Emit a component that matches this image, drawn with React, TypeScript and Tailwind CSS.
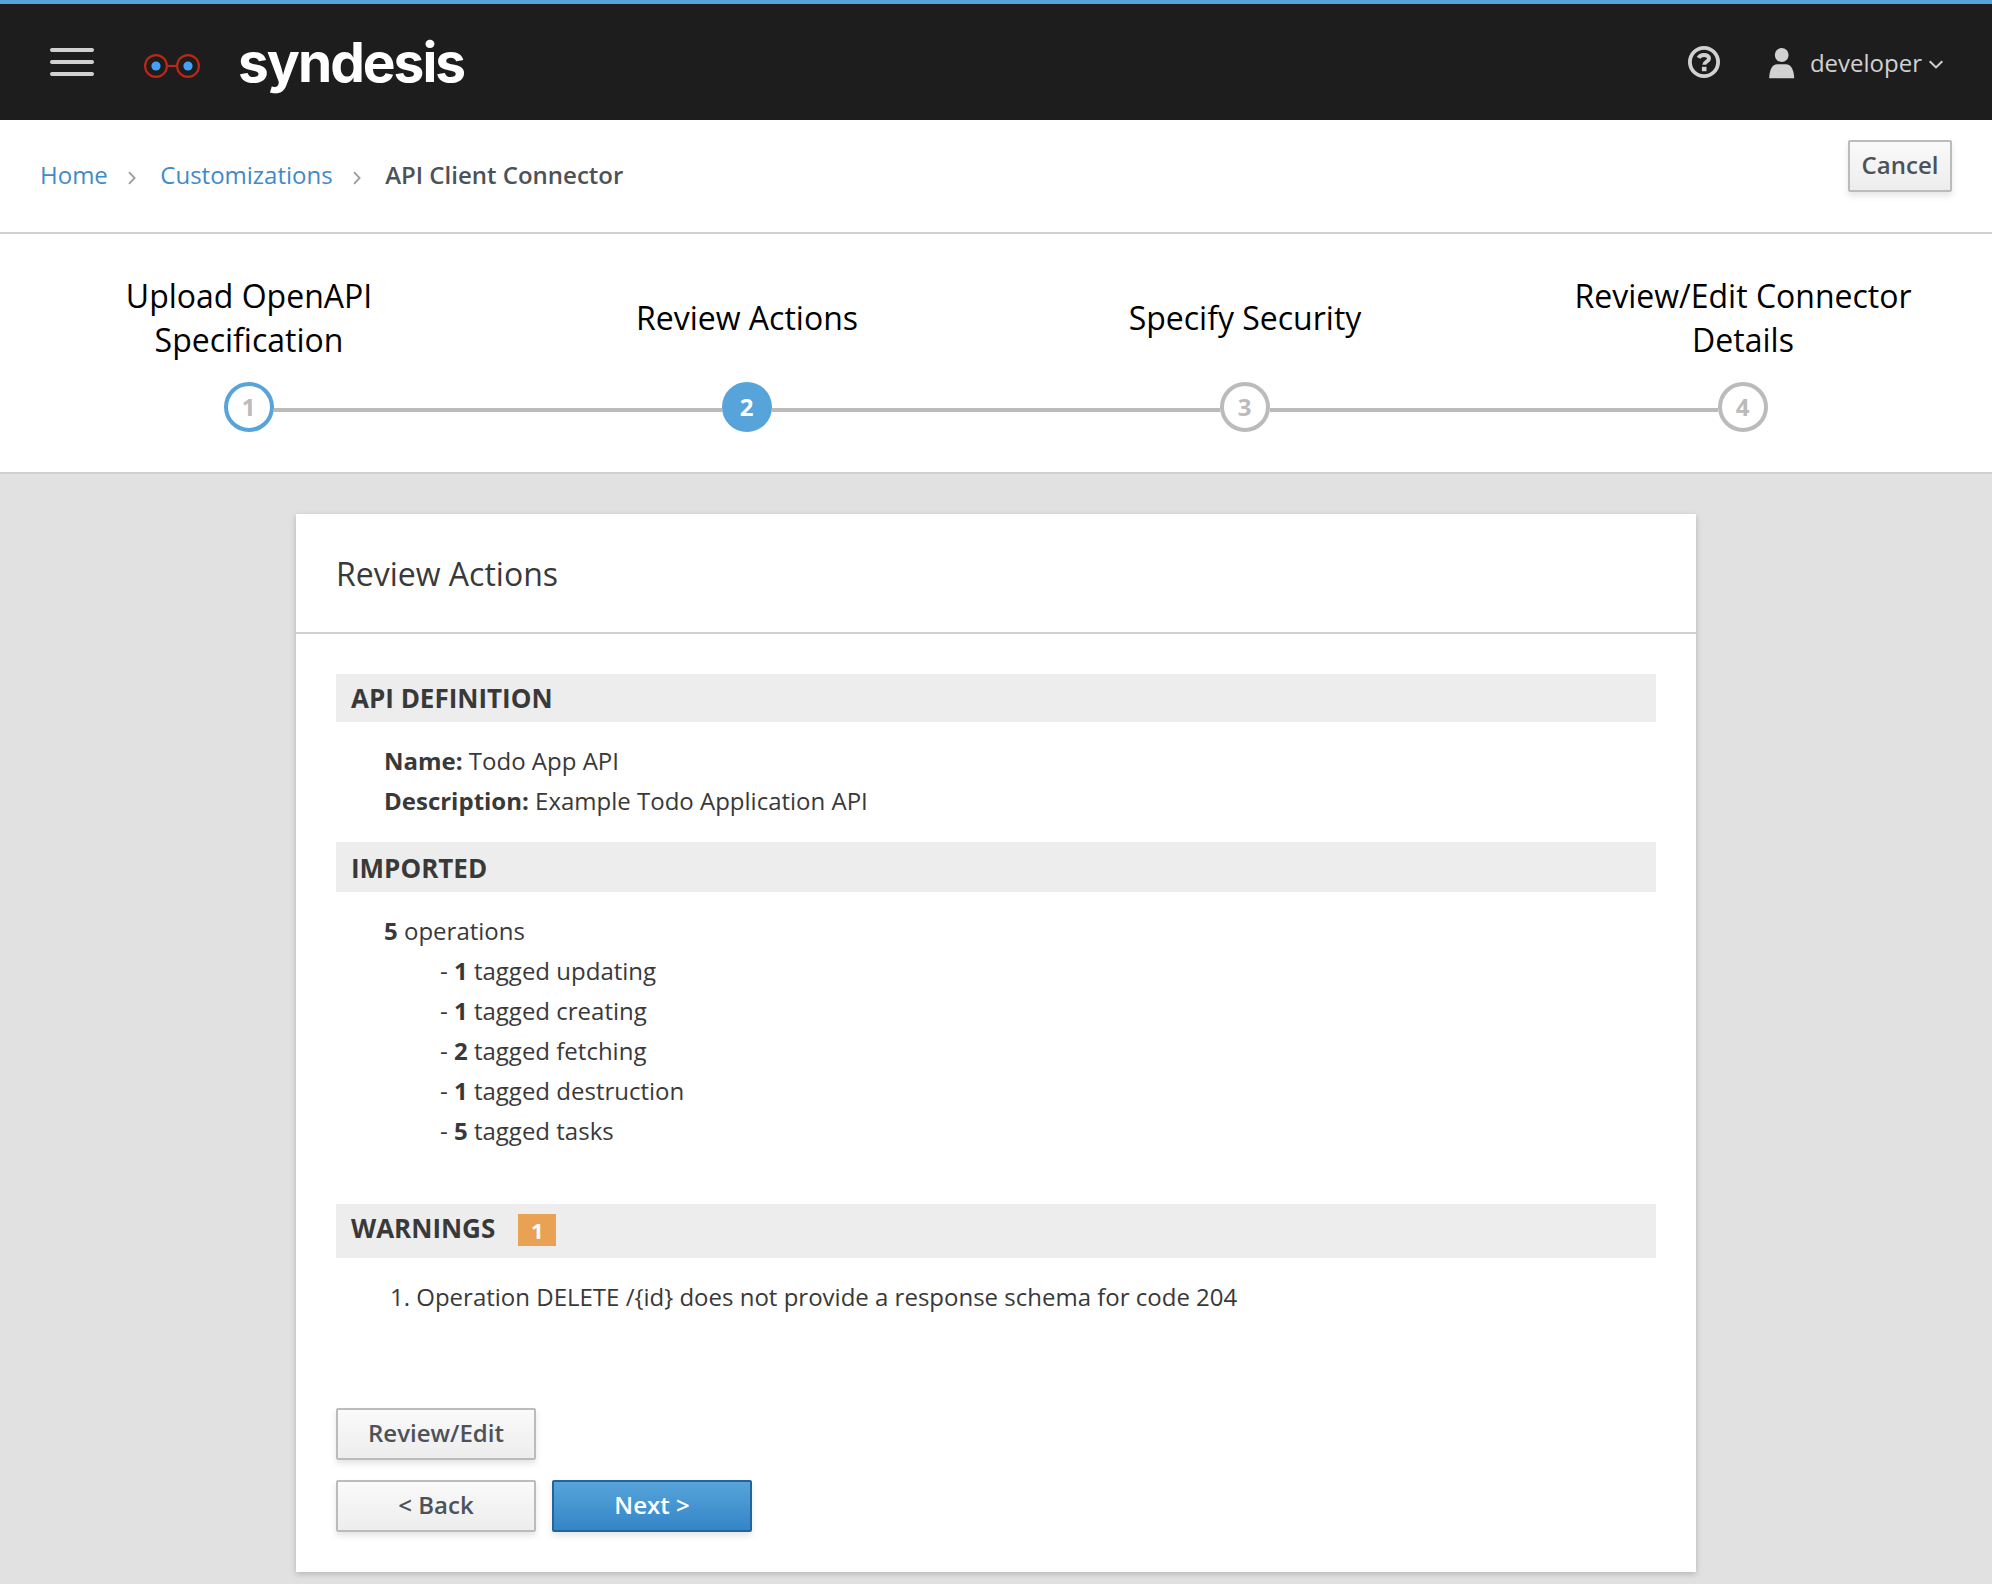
const steps = [
  { n: 1, label: ["Upload OpenAPI", "Specification"], state: "visited" },
  { n: 2, label: ["Review Actions"], state: "active" },
  { n: 3, label: ["Specify Security"], state: "todo" },
  { n: 4, label: ["Review/Edit Connector", "Details"], state: "todo" },
];

const circleStyles: Record<string, string> = {
  visited: "border-[#57a4da] bg-white text-[#bbbbbb]",
  active: "border-[#57a4da] bg-[#57a4da] text-white",
  todo: "border-[#bbbbbb] bg-white text-[#bbbbbb]",
};

const tags = [
  { count: 1, name: "updating" },
  { count: 1, name: "creating" },
  { count: 2, name: "fetching" },
  { count: 1, name: "destruction" },
  { count: 5, name: "tasks" },
];

const buttonBase =
  "flex h-[52px] items-center justify-center rounded-[2px] border-2 pb-0.5 text-[24px] font-semibold leading-10 shadow-[0_4px_6px_rgba(3,3,3,0.1)]";
const defaultButton =
  "border-[#bbbbbb] bg-linear-to-b from-[#fafafa] to-[#ededed] text-[#4d5258]";
const primaryButton =
  "border-[#23659a] bg-linear-to-b from-[#57a4da] to-[#3485c8] text-white";

function Chevron() {
  return (
    <svg width="8" height="14" viewBox="0 0 8 14" fill="none" stroke="#9c9c9c" strokeWidth="1.8">
      <path d="M1 1.2 6.6 7 1 12.8" />
    </svg>
  );
}

function Header() {
  return (
    <header className="flex h-[120px] items-center border-t-4 border-[#57a4da] bg-[#1d1d1d] pl-[50px] pr-[49px] text-[#d1d1d1]">
      <div className="flex w-11 flex-col gap-2">
        <span className="h-1 rounded-[2px] bg-[#d1d1d1]" />
        <span className="h-1 rounded-[2px] bg-[#d1d1d1]" />
        <span className="h-1 rounded-[2px] bg-[#d1d1d1]" />
      </div>
      <svg className="ml-[50px] mt-2" width="56" height="24" viewBox="0 0 56 24">
        <g fill="none" stroke="#bb271a" strokeWidth="2.2">
          <circle cx="12" cy="12" r="10.9" />
          <circle cx="44" cy="12" r="10.900" />
          <path d="M23 12h10" />
        </g>
        <circle cx="12" cy="12" r="4.6" fill="#459ff5" />
        <circle cx="44" cy="12" r="4.6" fill="#459ff5" />
      </svg>
      <div className="ml-[38px] font-['Inter',sans-serif] text-[55px] font-bold leading-[60px] tracking-[-2px] text-white">
        syndesis
      </div>
      <div className="ml-auto flex items-center">
        <svg width="32" height="32" viewBox="0 0 32 32" fill="none" stroke="#d1d1d1">
          <circle cx="16" cy="16" r="14.100" strokeWidth="3.800" />
          <path d="M10.600 11.900C11.700 9.700 13.600 8.900 16 8.900c2.900 0 5 1.400 5 3.600 0 3.300-4.700 3-4.700 6.300" strokeWidth="4" />
          <path d="M16.200 20.800v4.400" strokeWidth="4.600" />
        </svg>
        <svg className="ml-[49px] mt-0.5" width="26" height="32" viewBox="0 0 26 32" fill="#d1d1d1">
          <ellipse cx="12.700" cy="8" rx="6.900" ry="6.900" />
          <path d="M.2 31.300C.4 23.500 2.800 17.300 8.500 17.300h8.200c5.700 0 8.300 6.200 8.500 14Z" />
        </svg>
        <span className="ml-[15px] mt-0.5 text-[24px] leading-10">developer</span>
        <svg className="ml-[7px] mt-1" width="14" height="9" viewBox="0 0 14 9" fill="none" stroke="#d1d1d1" strokeWidth="2">
          <path d="M.7 1.200 7 7.400 13.300 1.200" />
        </svg>
      </div>
    </header>
  );
}

function Breadcrumb() {
  return (
    <div className="flex h-[114px] items-start justify-between border-b-2 border-[#d1d1d1] bg-white pl-10 pr-10">
      <nav className="mt-[35px] flex items-center text-[24px] leading-10">
        <a className="text-[#3f8acb]">Home</a>
        <span className="ml-5 mr-[24.5px] pt-1.5">
          <Chevron />
        </span>
        <a className="text-[#3f8acb]">Customizations</a>
        <span className="ml-5 mr-[24.5px] pt-1.5">
          <Chevron />
        </span>
        <span className="font-semibold text-[#4d5258]">API Client Connector</span>
      </nav>
      <button className={`${buttonBase} ${defaultButton} mt-5 w-[104px]`}>Cancel</button>
    </div>
  );
}

function Steps() {
  return (
    <div className="grid h-[240px] grid-cols-4 border-b-2 border-[#cfcfcf] bg-white pt-10">
      {steps.map((s, i) => (
        <div key={s.n} className="flex flex-col items-center">
          <div className="flex h-[88px] flex-col justify-center text-center text-[32px] leading-[44px] text-black">
            {s.label.map((line) => (
              <div key={line}>{line}</div>
            ))}
          </div>
          <div className="mt-5 flex w-full items-center">
            <span className={`mt-1.5 h-1 flex-1 ${i > 0 ? "bg-[#bbbbbb]" : ""}`} />
            <span
              className={`flex size-[50px] items-center justify-center rounded-full border-4 pr-px text-[24px] font-bold leading-none ${circleStyles[s.state]}`}
            >
              {s.n}
            </span>
            <span className={`mt-1.5 h-1 flex-1 ${i < 3 ? "bg-[#bbbbbb]" : ""}`} />
          </div>
        </div>
      ))}
    </div>
  );
}

export default function App() {
  return (
    <div className="flex h-[1584px] w-[1992px] flex-col overflow-hidden bg-[#e1e1e1] font-['Open_Sans',sans-serif] text-[24px] leading-10 text-[#393939]">
      <Header />
      <Breadcrumb />
      <Steps />
      <main className="mx-auto mt-10 h-[1058px] w-[1400px] bg-white shadow-[0_2px_6px_rgba(3,3,3,0.2)]">
        <h1 className="flex h-[120px] items-center border-b-2 border-[#d1d1d1] px-10 pt-0.5 text-[32px]">
          Review Actions
        </h1>
        <div className="px-10 pt-10">
          <h2 className="h-12 bg-[#ededed] px-[15px] text-[26px] font-bold leading-[48px]">API DEFINITION</h2>
          <div className="pl-12 pt-[19px]">
            <p>
              <strong>Name:</strong> Todo App API
            </p>
            <p>
              <strong>Description:</strong> Example Todo Application API
            </p>
          </div>
          <h2 className="mt-[21px] h-[50px] bg-[#ededed] px-[15px] text-[26px] font-bold leading-[52px]">IMPORTED</h2>
          <div className="pl-12 pt-[19px]">
            <p>
              <strong>5</strong> operations
            </p>
            <div className="pl-14">
              {tags.map((t) => (
                <p key={t.name}>
                  - <strong>{t.count}</strong> tagged {t.name}
                </p>
              ))}
            </div>
          </div>
          <h2 className="mt-[53px] flex h-[54px] items-center bg-[#ededed] px-[15px] pb-0.5 text-[26px] font-bold">
            <span className="-mt-1">WARNINGS</span>
            <span className="ml-[23px] flex h-8 w-[38px] items-center justify-center bg-[#e9a153] text-[22px] leading-none text-white">
              1
            </span>
          </h2>
          <p className="pl-[54px] pt-[19px]">
            1. Operation DELETE /{"{id}"} does not provide a response schema for code 204
          </p>
          <div className="mt-[91px] flex flex-col gap-5">
            <button className={`${buttonBase} ${defaultButton} w-[200px]`}>Review/Edit</button>
            <div className="flex gap-4">
              <button className={`${buttonBase} ${defaultButton} w-[200px]`}>&lt; Back</button>
              <button className={`${buttonBase} ${primaryButton} w-[200px]`}>Next &gt;</button>
            </div>
          </div>
        </div>
      </main>
    </div>
  );
}
